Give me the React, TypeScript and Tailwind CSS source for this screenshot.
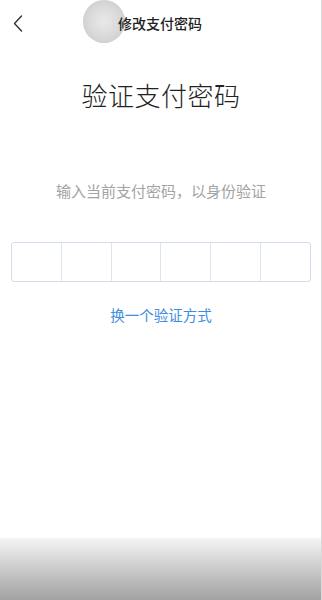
const font = "font-['Noto_Sans_CJK_SC','Noto_Sans',sans-serif]";

function BackIcon() {
  return (
    <svg width="10" height="17" viewBox="0 0 10 17" fill="none">
      <path d="M8.5 1 L1.5 8.5 L8.5 16" stroke="#333" strokeWidth="1.4" strokeLinecap="round" strokeLinejoin="round" />
    </svg>
  );
}

export default function App() {
  const cells = [0, 1, 2, 3, 4, 5];
  return (
    <div className={`relative w-[322px] h-[600px] bg-white overflow-hidden ${font}`}>
      {/* touch indicator from screen recording */}
      <div className="absolute left-[83px] top-[0px] w-[42px] h-[43px] rounded-full bg-[radial-gradient(circle_at_50%_50%,#e6e6e6_0%,#d4d4d4_55%,#bdbdbd_100%)] opacity-90" />

      {/* Header */}
      <div className="relative flex items-center h-[46px] px-[13px]">
        <BackIcon />
        <div className="flex-1 text-center text-[14px] font-medium text-[#222] pr-[12px] leading-none">
          修改支付密码
        </div>
      </div>

      {/* Content */}
      <div className="flex flex-col items-center">
        <h1 className="mt-[36px] text-[26px] font-light text-[#222] leading-none tracking-[0.5px]">
          验证支付密码
        </h1>
        <p className="mt-[75px] text-[15px] text-[#a3a3a3] leading-none">
          输入当前支付密码，以身份验证
        </p>
        <div className="mt-[44px] flex w-[300px] h-[40px] border border-[#d3ddeb] rounded-[3px] overflow-hidden">
          {cells.map((i) => (
            <div key={i} className={`flex-1 ${i > 0 ? "border-l border-[#dfe3ea]" : ""}`} />
          ))}
        </div>
        <button className="mt-[26px] text-[14.5px] text-[#3d8ede] leading-none">
          换一个验证方式
        </button>
      </div>

      {/* bottom shade */}
      <div className="absolute left-0 right-0 bottom-0 h-[62px] bg-gradient-to-b from-[#f5f5f5] to-[#a2a2a2]" />
      <div className="absolute top-0 bottom-0 right-0 w-px bg-[#d9d9d9]" />
    </div>
  );
}
